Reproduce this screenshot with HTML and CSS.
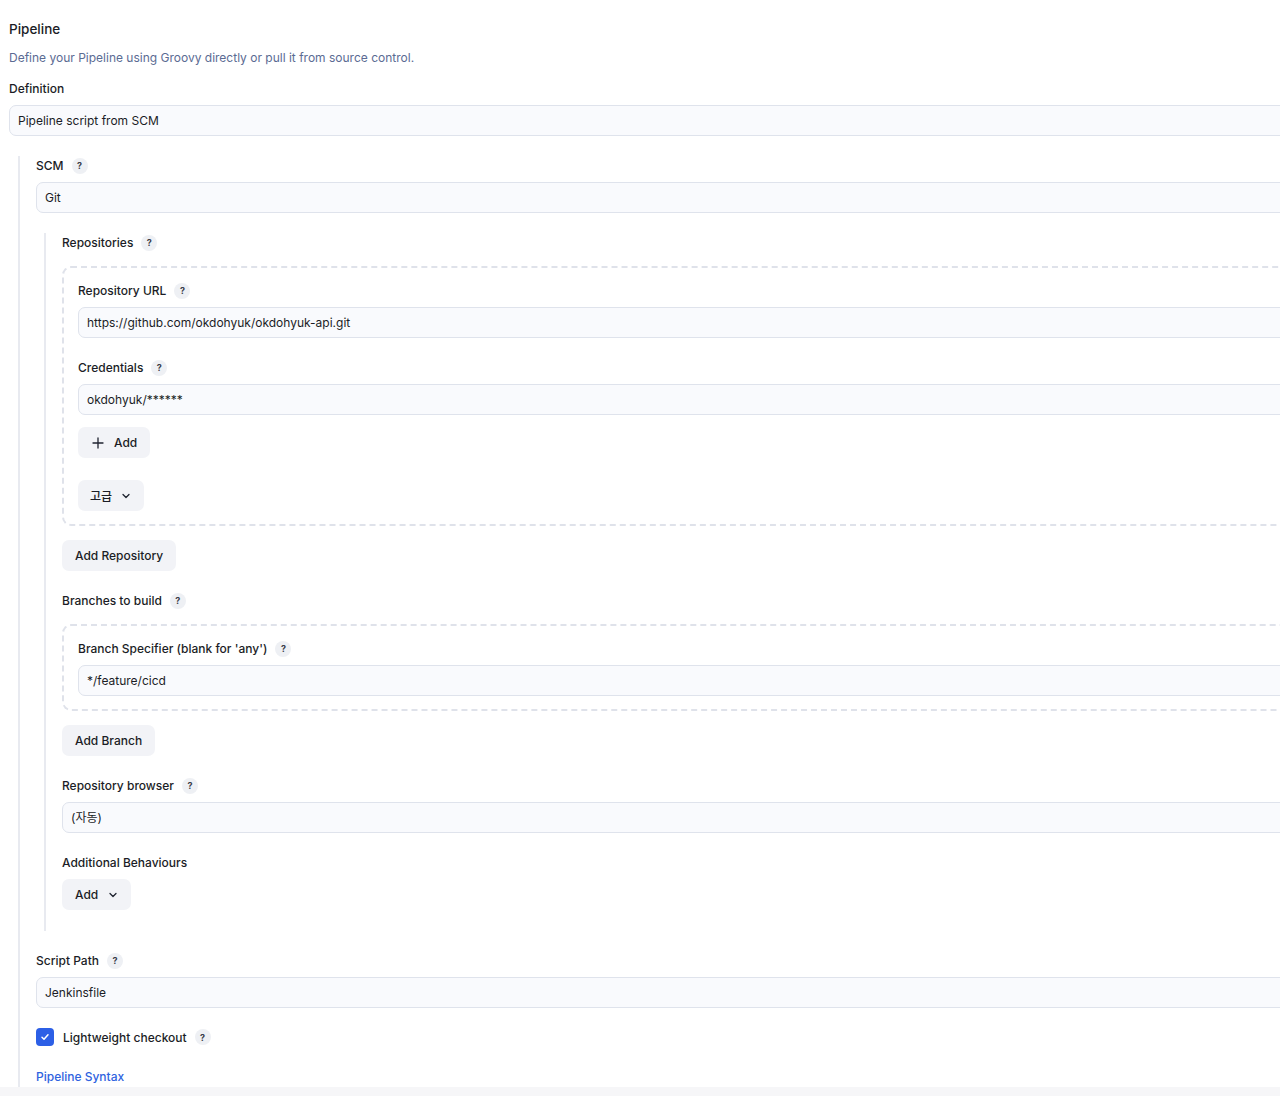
FILE: index.html
```html
<!DOCTYPE html>
<html lang="ko">
<head>
    <meta charset="UTF-8">
    <title>Pipeline</title>
    <link rel="stylesheet" href="styles.css">
</head>
<body>
    <div class="page">
        <h2 class="section-title">Pipeline</h2>
        <p class="section-desc">Define your Pipeline using Groovy directly or pull it from source control.</p>

        <div class="form-item">
            <div class="form-label">Definition</div>
            <div class="field">Pipeline script from SCM</div>
        </div>

        <div class="nested">
            <div class="form-item">
                <div class="form-label">SCM <span class="help">?</span></div>
                <div class="field">Git</div>
            </div>

            <div class="nested inner">
                <div class="form-item">
                    <div class="form-label">Repositories <span class="help">?</span></div>
                    <div class="repeat-box">
                        <div class="form-item">
                            <div class="form-label">Repository URL <span class="help">?</span></div>
                            <div class="field">https://github.com/okdohyuk/okdohyuk-api.git</div>
                        </div>
                        <div class="form-item tight">
                            <div class="form-label">Credentials <span class="help">?</span></div>
                            <div class="field">okdohyuk/******</div>
                            <button class="btn btn-add">
                                <svg width="12" height="12" viewBox="0 0 12 12"><path d="M6 1v10M1 6h10" stroke="#1f2330" stroke-width="1.3" stroke-linecap="round" fill="none"/></svg>
                                Add
                            </button>
                        </div>
                        <button class="btn btn-advanced">
                            고급
                            <svg width="10" height="10" viewBox="0 0 10 10"><path d="M2 3.5l3 3 3-3" stroke="#1f2330" stroke-width="1.3" stroke-linecap="round" stroke-linejoin="round" fill="none"/></svg>
                        </button>
                    </div>
                    <button class="btn">Add Repository</button>
                </div>

                <div class="form-item">
                    <div class="form-label">Branches to build <span class="help">?</span></div>
                    <div class="repeat-box">
                        <div class="form-item last">
                            <div class="form-label">Branch Specifier (blank for 'any') <span class="help">?</span></div>
                            <div class="field">*/feature/cicd</div>
                        </div>
                    </div>
                    <button class="btn">Add Branch</button>
                </div>

                <div class="form-item">
                    <div class="form-label">Repository browser <span class="help">?</span></div>
                    <div class="field">(자동)</div>
                </div>

                <div class="form-item last">
                    <div class="form-label">Additional Behaviours</div>
                    <button class="btn btn-dropdown">
                        Add
                        <svg width="10" height="10" viewBox="0 0 10 10"><path d="M2 3.5l3 3 3-3" stroke="#1f2330" stroke-width="1.3" stroke-linecap="round" stroke-linejoin="round" fill="none"/></svg>
                    </button>
                </div>
            </div>

            <div class="form-item">
                <div class="form-label">Script Path <span class="help">?</span></div>
                <div class="field">Jenkinsfile</div>
            </div>

            <div class="checkbox-row">
                <span class="checkbox">
                    <svg width="10" height="10" viewBox="0 0 10 10"><path d="M2 5.2l2 2 4-4.4" stroke="#fff" stroke-width="1.5" stroke-linecap="round" stroke-linejoin="round" fill="none"/></svg>
                </span>
                <span class="checkbox-label">Lightweight checkout</span>
                <span class="help">?</span>
            </div>

            <a class="link" href="#">Pipeline Syntax</a>
        </div>
    </div>
    <div class="bottom-bar"></div>
</body>
</html>
```

FILE: styles.css
```css
/* Basic reset */
* {
    margin: 0;
    padding: 0;
    box-sizing: border-box;
}

body {
    font-family: Inter, "Noto Sans CJK KR", sans-serif;
    font-size: 12px;
    color: #1b1d26;
    background-color: #fff;
    overflow: hidden;
}

.page {
    width: 1340px;
    padding: 19px 0 0 9px;
}

/* Headings */
.section-title {
    font-size: 13.5px;
    font-weight: 500;
    line-height: 20px;
    margin-bottom: 9px;
}

.section-desc {
    color: #5b6b93;
    line-height: 20px;
    margin-bottom: 11px;
}

/* Form items */
.form-item {
    margin-bottom: 20px;
}

.form-item.last {
    margin-bottom: 0;
}

.form-label {
    display: flex;
    align-items: center;
    font-weight: 500;
    line-height: 20px;
    margin-bottom: 6px;
}

.help {
    display: inline-flex;
    align-items: center;
    justify-content: center;
    width: 16px;
    height: 16px;
    margin-left: 8px;
    border-radius: 50%;
    background-color: #eef0f4;
    color: #3a3d48;
    font-size: 9px;
    font-weight: 700;
}

.field {
    height: 31px;
    line-height: 29px;
    padding: 0 8px;
    border: 1.5px solid #dfe3ec;
    border-radius: 7px;
    background-color: #f9fafd;
}

/* Nested sections */
.nested {
    margin-left: 9px;
    padding-left: 16px;
    border-left: 2px solid #e8eaf0;
}

.nested.inner {
    margin-left: 8px;
    margin-bottom: 20px;
    padding-bottom: 21px;
}

/* Repeated blocks */
.repeat-box {
    margin-top: 13px;
    margin-bottom: 14px;
    padding: 13px 14px 13px;
    border: 2px dashed #dfe2ea;
    border-radius: 9px;
}

/* Buttons */
.btn {
    display: inline-flex;
    align-items: center;
    gap: 8px;
    height: 31px;
    padding: 0 13px;
    border: none;
    border-radius: 7px;
    background-color: #f2f3f7;
    color: #1b1d26;
    font-family: inherit;
    font-size: 12px;
    font-weight: 500;
}

.btn-add {
    margin-top: 12px;
    gap: 10px;
    padding: 0 13px 0 14px;
}

.form-item.tight {
    margin-bottom: 22px;
}

.btn-advanced {
    gap: 9px;
    padding: 0 13px 0 12px;
}

.btn-dropdown {
    gap: 10px;
}

/* Checkbox */
.checkbox-row {
    display: flex;
    align-items: center;
    margin-top: 4px;
    height: 18px;
}

.checkbox {
    display: inline-flex;
    align-items: center;
    justify-content: center;
    width: 18px;
    height: 18px;
    border-radius: 4px;
    background-color: #2c5fe6;
    margin-right: 9px;
}

.checkbox-label {
    font-weight: 500;
}

.link {
    display: block;
    margin-top: 21px;
    line-height: 20px;
    color: #2f63e0;
    font-weight: 500;
    text-decoration: none;
}

.bottom-bar {
    height: 10px;
    background-color: #f6f6f8;
}
```
